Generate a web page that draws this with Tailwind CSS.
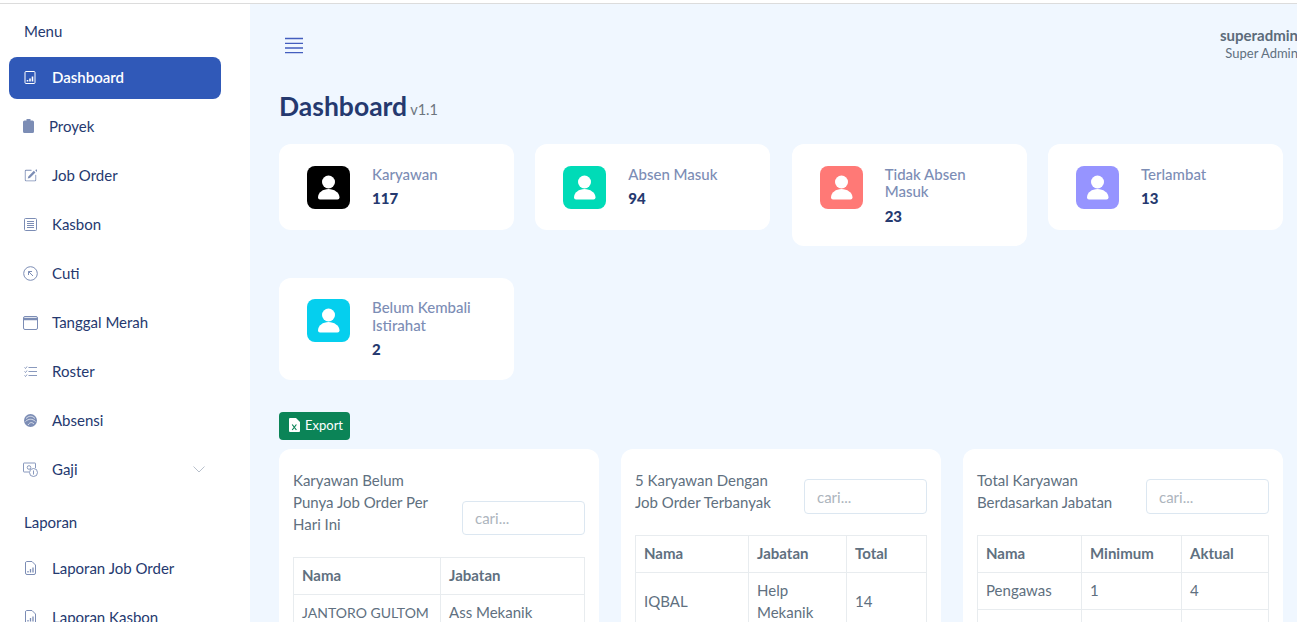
<!DOCTYPE html>
<html lang="en">
<head>
<meta charset="UTF-8" />
<title>Dashboard</title>
<script src="https://cdn.jsdelivr.net/npm/@tailwindcss/browser@4"></script>
</head>
<body class="h-[622px] overflow-hidden bg-[#f0f7ff] font-['Lato',sans-serif] text-[15px] text-[#607080]">
  <div class="h-[4px] border-b border-[#dcdcdc] bg-white"></div>
  <div class="flex h-[618px] overflow-hidden">

    <!-- sidebar -->
    <aside class="w-[250px] shrink-0 bg-white text-[#25396f]">
      <div class="pl-[24px] pt-[18px] pb-[17px] leading-[18px]">Menu</div>
      <nav class="flex flex-col gap-[7px] px-[9px]">
        <a class="flex h-[42px] w-[212px] items-center rounded-lg bg-[#3059b8] pb-[2px] pl-[15px] font-semibold text-white">
          <svg class="mr-[16px] h-[13px] w-[12px]" viewBox="0 0 12 13" fill="none" stroke="currentColor"><rect x="1" y="0.5" width="10" height="12" rx="1"/><path d="M3.5 10.5v-1.5M6 10.5v-3M8.500 10.500v-5" stroke-width="1.6"/></svg>
          Dashboard
        </a>
        <a class="flex h-[42px] items-center pb-[2px] pl-[14px]">
          <svg class="mr-[15px] h-[14px] w-[11px] text-[#7c8db5]" viewBox="0 0 11 14" fill="currentColor"><path d="M3.500 0h4v1.500h2a1.500 1.500 0 0 1 1.500 1.500v9.500a1.500 1.500 0 0 1-1.500 1.500h-8A1.500 1.500 0 0 1 0 12.500V3a1.500 1.500 0 0 1 1.500-1.500h2z"/></svg>
          Proyek
        </a>
        <a class="flex h-[42px] items-center pb-[2px] pl-[15px]">
          <svg class="mr-[15px] h-[13px] w-[13px] text-[#7c8db5]" viewBox="0 0 16 16" fill="currentColor"><path d="M15.500.600a.5.500 0 0 0-.700 0l-1 1 2 2 1-1a.500.500 0 0 0 0-.700zM14.100 4.300l-2-2-6.800 6.800-.700 2.700 2.700-.700z"/><path fill-rule="evenodd" d="M1 13.500A1.500 1.500 0 0 0 2.500 15h11a1.500 1.500 0 0 0 1.500-1.500v-6a.5.5 0 0 0-1 0v6a.5.5 0 0 1-.5.5h-11a.5.5 0 0 1-.5-.5v-11a.5.5 0 0 1 .5-.5H9a.5.5 0 0 0 0-1H2.500A1.500 1.500 0 0 0 1 2.500z"/></svg>
          Job Order
        </a>
        <a class="flex h-[42px] items-center pb-[2px] pl-[15px]">
          <svg class="mr-[15px] h-[13px] w-[13px] text-[#7c8db5]" viewBox="0 0 13 13" fill="none" stroke="currentColor" stroke-width="1"><rect x="0.500" y="0.500" width="12" height="12" rx="1"/><path d="M3 3.500h7M3 5.500h7M3 7.500h7M3 9.500h7"/></svg>
          Kasbon
        </a>
        <a class="flex h-[42px] items-center pb-[2px] pl-[14px]">
          <svg class="mr-[14px] h-[15px] w-[15px] text-[#7c8db5]" viewBox="0 0 15 15" fill="none" stroke="currentColor"><circle cx="7.500" cy="7.500" r="6.800"/><path d="M10 10 5.500 5.500M5.500 9V5.500H9"/></svg>
          Cuti
        </a>
        <a class="flex h-[42px] items-center pb-[2px] pl-[14px]">
          <svg class="mr-[14px] h-[15px] w-[15px] text-[#7c8db5]" viewBox="0 0 15 15" fill="none" stroke="currentColor"><rect x="0.500" y="1.500" width="14" height="13" rx="1.500"/><path d="M0.500 4h14" stroke-width="2.500"/></svg>
          Tanggal Merah
        </a>
        <a class="flex h-[42px] items-center pb-[2px] pl-[15px]">
          <svg class="mr-[15px] h-[13px] w-[13px] text-[#7c8db5]" viewBox="0 0 13 13" fill="none" stroke="currentColor" stroke-width="0.900"><path d="M4.500 2.500H13M4.500 6.500H13M4.500 10.500H13M0.500 2.500l1 1 1.500-2M0.500 6.500l1 1 1.500-2M0.500 10.500l1 1 1.500-2"/></svg>
          Roster
        </a>
        <a class="flex h-[42px] items-center pb-[2px] pl-[15px]">
          <svg class="mr-[15px] h-[13px] w-[13px] text-[#7c8db5]" viewBox="0 0 13 13" fill="currentColor"><circle cx="6.500" cy="6.500" r="6.500"/><path d="M2 4.500c3-3 6-3 9 0M1.500 7.500c3-3 7-3 10 0M4 11c2-3 4-3 6-1" fill="none" stroke="#fff" stroke-width="0.700"/></svg>
          Absensi
        </a>
        <a class="flex h-[42px] items-center pb-[2px] pl-[14px]">
          <svg class="mr-[14px] h-[15px] w-[15px] text-[#7c8db5]" viewBox="0 0 15 15" fill="none" stroke="currentColor" stroke-width="0.900"><path d="M6 10H1a.5.5 0 0 1-.5-.5v-8A.5.5 0 0 1 1 1h11a.5.5 0 0 1 .5.500V6"/><circle cx="6" cy="5.500" r="1.800"/><circle cx="10.500" cy="10.500" r="4"/><path d="M10.500 8.500v4"/></svg>
          Gaji
          <svg class="ml-auto mr-[36px] h-[7px] w-[12px] text-[#b8c0cc]" viewBox="0 0 12 7" fill="none" stroke="currentColor"><path d="m0.500 0.500 5.500 5.500 5.500-5.500"/></svg>
        </a>
      </nav>
      <div class="pl-[24px] pt-[22px] pb-[17px] leading-[18px]">Laporan</div>
      <nav class="flex flex-col gap-[7px] px-[9px]">
        <a class="flex h-[42px] items-center pb-[2px] pl-[16px]">
          <svg class="mr-[16px] h-[14px] w-[11px] text-[#7c8db5]" viewBox="0 0 11 14" fill="none" stroke="currentColor"><path d="M1.500 0.500H7L10.500 4v8a1.500 1.500 0 0 1-1.500 1.500H2A1.500 1.500 0 0 1 0.500 12V2a1.500 1.500 0 0 1 1-1.500z"/><path d="M3 11.500v-1.500M5.500 11.500V8M8 11.500V6.500" stroke-width="1.300"/></svg>
          Laporan Job Order
        </a>
        <a class="flex h-[42px] items-center pb-[2px] pl-[16px]">
          <svg class="mr-[16px] h-[14px] w-[11px] text-[#7c8db5]" viewBox="0 0 11 14" fill="none" stroke="currentColor"><path d="M1.500 0.500H7L10.500 4v8a1.500 1.500 0 0 1-1.500 1.500H2A1.500 1.500 0 0 1 0.500 12V2a1.500 1.500 0 0 1 1-1.500z"/><path d="M3 11.500v-1.500M5.500 11.500V8M8 11.500V6.500" stroke-width="1.300"/></svg>
          Laporan Kasbon
        </a>
      </nav>
    </aside>

    <!-- main -->
    <main class="min-w-0 flex-1 pl-[29px] pr-[14px]">
      <header class="flex h-[83px] items-start justify-between">
        <svg class="ml-[5px] mt-[33px] h-[17px] w-[20px] text-[#435ebe]" viewBox="0 0 20 17" fill="none" stroke="currentColor" stroke-width="1.300"><path d="M1 1.500h18M1 6.300h18M1 11h18M1 15.700h18"/></svg>
        <div class="mr-[-15px] mt-[22px] text-right">
          <div class="text-[15px] font-bold leading-[18px] text-[#5c6b7a]">superadmin</div>
          <div class="text-[13px] leading-[18px]">Super Admin</div>
        </div>
      </header>

      <h1 class="flex h-[57px] items-start text-[#25396f]">
        <span class="mt-[1px] text-[26.5px] font-bold leading-[36px]">Dashboard</span>
        <span class="ml-[3px] mt-[13px] text-[14.5px] leading-[20px] text-[#6c757d]">v1.1</span>
      </h1>

      <!-- stat cards -->
      <section class="grid grid-cols-4 items-start gap-x-[21.33px] gap-y-[31.6px]">
        <div class="flex rounded-xl bg-white px-[28px] py-[21.5px]">
          <div class="flex h-[43px] w-[43px] shrink-0 items-center justify-center rounded-lg bg-black text-white">
            <svg class="h-[43px] w-[43px]" viewBox="0 0 43 43" fill="currentColor"><circle cx="21.500" cy="16" r="6.500"/><path d="M13 33.500a2 2 0 0 1-2-2c0-5 5-8.500 10.500-8.500s11 3.500 11 8.500a2 2 0 0 1-2 2z"/></svg>
          </div>
          <div class="ml-[22px] min-w-0">
            <div class="text-[15px] font-medium leading-[17.6px] text-[#7c8db5]">Karyawan</div>
            <div class="mt-[6px] text-[15px] font-black leading-[18px] text-[#25396f]">117</div>
          </div>
        </div>
        <div class="flex rounded-xl bg-white px-[28px] py-[21.5px]">
          <div class="flex h-[43px] w-[43px] shrink-0 items-center justify-center rounded-lg bg-[#00dbb7] text-white">
            <svg class="h-[43px] w-[43px]" viewBox="0 0 43 43" fill="currentColor"><circle cx="21.500" cy="16" r="6.500"/><path d="M13 33.500a2 2 0 0 1-2-2c0-5 5-8.500 10.500-8.500s11 3.500 11 8.500a2 2 0 0 1-2 2z"/></svg>
          </div>
          <div class="ml-[22px] min-w-0">
            <div class="text-[15px] font-medium leading-[17.6px] text-[#7c8db5]">Absen Masuk</div>
            <div class="mt-[6px] text-[15px] font-black leading-[18px] text-[#25396f]">94</div>
          </div>
        </div>
        <div class="flex rounded-xl bg-white px-[28px] py-[21.5px]">
          <div class="flex h-[43px] w-[43px] shrink-0 items-center justify-center rounded-lg bg-[#ff7976] text-white">
            <svg class="h-[43px] w-[43px]" viewBox="0 0 43 43" fill="currentColor"><circle cx="21.500" cy="16" r="6.500"/><path d="M13 33.500a2 2 0 0 1-2-2c0-5 5-8.500 10.500-8.500s11 3.500 11 8.500a2 2 0 0 1-2 2z"/></svg>
          </div>
          <div class="ml-[22px] min-w-0">
            <div class="w-[95px] text-[15px] font-medium leading-[17.6px] text-[#7c8db5]">Tidak Absen Masuk</div>
            <div class="mt-[6px] text-[15px] font-black leading-[18px] text-[#25396f]">23</div>
          </div>
        </div>
        <div class="flex rounded-xl bg-white px-[28px] py-[21.5px]">
          <div class="flex h-[43px] w-[43px] shrink-0 items-center justify-center rounded-lg bg-[#9694ff] text-white">
            <svg class="h-[43px] w-[43px]" viewBox="0 0 43 43" fill="currentColor"><circle cx="21.500" cy="16" r="6.500"/><path d="M13 33.500a2 2 0 0 1-2-2c0-5 5-8.500 10.500-8.500s11 3.500 11 8.500a2 2 0 0 1-2 2z"/></svg>
          </div>
          <div class="ml-[22px] min-w-0">
            <div class="text-[15px] font-medium leading-[17.6px] text-[#7c8db5]">Terlambat</div>
            <div class="mt-[6px] text-[15px] font-black leading-[18px] text-[#25396f]">13</div>
          </div>
        </div>
        <div class="flex rounded-xl bg-white px-[28px] py-[21.5px]">
          <div class="flex h-[43px] w-[43px] shrink-0 items-center justify-center rounded-lg bg-[#05cfee] text-white">
            <svg class="h-[43px] w-[43px]" viewBox="0 0 43 43" fill="currentColor"><circle cx="21.500" cy="16" r="6.500"/><path d="M13 33.500a2 2 0 0 1-2-2c0-5 5-8.500 10.500-8.500s11 3.500 11 8.500a2 2 0 0 1-2 2z"/></svg>
          </div>
          <div class="ml-[22px] min-w-0">
            <div class="w-[105px] text-[15px] font-medium leading-[17.6px] text-[#7c8db5]">Belum Kembali Istirahat</div>
            <div class="mt-[6px] text-[15px] font-black leading-[18px] text-[#25396f]">2</div>
          </div>
        </div>
      </section>

      <button class="mt-[32.4px] flex h-[28px] w-[71px] items-center rounded-[4px] bg-[#0b8457] pb-[2px] pl-[10px] text-[13px] text-white">
        <svg class="mr-[5px] h-[14px] w-[11px]" viewBox="0 0 11 14"><path fill="#fff" d="M1 0h6l4 4v9a1 1 0 0 1-1 1H1a1 1 0 0 1-1-1V1a1 1 0 0 1 1-1z"/><path d="m3.200 6.500 4.200 5.500m0-5.500L3.200 12" stroke="#0b8457" stroke-width="1.200" fill="none"/></svg>
        Export
      </button>

      <!-- tables -->
      <section class="mt-[9px] grid grid-cols-3 items-start gap-x-[22px]">
        <div class="rounded-xl bg-white px-[14px] pt-[20px] pb-[20px]">
          <div class="mb-[22px] flex items-end justify-between">
            <h2 class="w-[150px] leading-[22px]">Karyawan Belum Punya Job Order Per Hari Ini</h2>
            <input class="h-[34px] w-[123px] rounded-[4px] border border-[#dce7f1] px-[12px] placeholder:text-[#adb5bd]" placeholder="cari..." />
          </div>
          <table class="w-full table-fixed border-collapse border border-[#e8ecef]">
            <colgroup><col class="w-[147px]" /><col /></colgroup>
            <thead>
              <tr class="h-[37px]"><th class="border border-[#e8ecef] px-[8px] pb-[2px] text-left font-bold">Nama</th><th class="border border-[#e8ecef] px-[8px] pb-[2px] text-left font-bold">Jabatan</th></tr>
            </thead>
            <tbody>
              <tr class="h-[37px]"><td class="whitespace-nowrap border border-[#e8ecef] px-[8px] pb-[2px] text-[14px]">JANTORO GULTOM</td><td class="border border-[#e8ecef] px-[8px] pb-[2px]">Ass Mekanik</td></tr>
            </tbody>
          </table>
        </div>
        <div class="rounded-xl bg-white px-[14px] pt-[20px] pb-[20px]">
          <div class="mb-[22px] flex items-end justify-between">
            <h2 class="w-[150px] leading-[22px]">5 Karyawan Dengan Job Order Terbanyak</h2>
            <input class="mb-[-1px] h-[35px] w-[123px] rounded-[4px] border border-[#dce7f1] px-[12px] placeholder:text-[#adb5bd]" placeholder="cari..." />
          </div>
          <table class="w-full table-fixed border-collapse border border-[#e8ecef]">
            <colgroup><col class="w-[113px]" /><col class="w-[98px]" /><col /></colgroup>
            <thead>
              <tr class="h-[37px]"><th class="border border-[#e8ecef] px-[8px] pb-[2px] text-left font-bold">Nama</th><th class="border border-[#e8ecef] px-[8px] pb-[2px] text-left font-bold">Jabatan</th><th class="border border-[#e8ecef] px-[8px] pb-[2px] text-left font-bold">Total</th></tr>
            </thead>
            <tbody>
              <tr><td class="border border-[#e8ecef] px-[8px] pb-[2px]">IQBAL</td><td class="border border-[#e8ecef] px-[8px] pt-[6px] pb-[8px] leading-[22px]">Help Mekanik</td><td class="border border-[#e8ecef] px-[8px] pb-[2px]">14</td></tr>
            </tbody>
          </table>
        </div>
        <div class="rounded-xl bg-white px-[14px] pt-[20px] pb-[20px]">
          <div class="mb-[22px] flex items-end justify-between">
            <h2 class="w-[150px] leading-[22px]">Total Karyawan Berdasarkan Jabatan</h2>
            <input class="mb-[-1px] h-[35px] w-[123px] rounded-[4px] border border-[#dce7f1] px-[12px] placeholder:text-[#adb5bd]" placeholder="cari..." />
          </div>
          <table class="w-full table-fixed border-collapse border border-[#e8ecef]">
            <colgroup><col class="w-[104px]" /><col class="w-[100px]" /><col /></colgroup>
            <thead>
              <tr class="h-[37px]"><th class="border border-[#e8ecef] px-[8px] pb-[2px] text-left font-bold">Nama</th><th class="border border-[#e8ecef] px-[8px] pb-[2px] text-left font-bold">Minimum</th><th class="border border-[#e8ecef] px-[8px] pb-[2px] text-left font-bold">Aktual</th></tr>
            </thead>
            <tbody>
              <tr class="h-[37px]"><td class="border border-[#e8ecef] px-[8px] pb-[2px]">Pengawas</td><td class="border border-[#e8ecef] px-[8px] pb-[2px]">1</td><td class="border border-[#e8ecef] px-[8px] pb-[2px]">4</td></tr>
              <tr class="h-[37px]"><td class="border border-[#e8ecef] px-[8px] pb-[2px]">Ass Mekanik</td><td class="border border-[#e8ecef] px-[8px] pb-[2px]">1</td><td class="border border-[#e8ecef] px-[8px] pb-[2px]">1</td></tr>
            </tbody>
          </table>
        </div>
      </section>
    </main>
  </div>
</body>
</html>
